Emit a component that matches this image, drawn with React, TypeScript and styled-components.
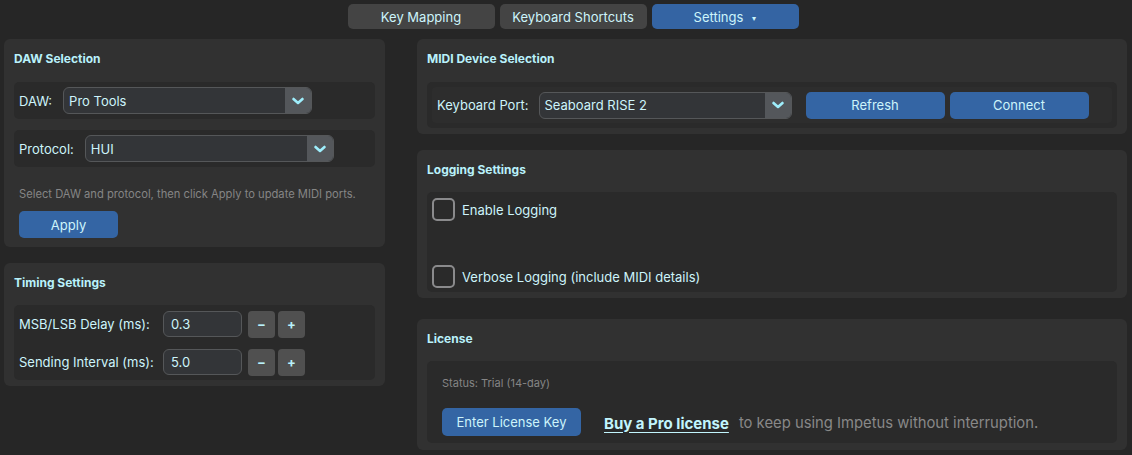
import styled, { createGlobalStyle } from "styled-components";

const GlobalStyle = createGlobalStyle`
	body {
		margin: 0;
		background: #262626;
		font-family: Inter, "Noto Sans", sans-serif;
		color: #cdf4fb;
	}
`;

const Chevron = () => (
	<svg width="14" height="10" viewBox="0 0 14 10">
		<path d="M2.5 3 L7 7 L11.5 3" fill="none" stroke="#9eeefc" strokeWidth="2.6" strokeLinecap="round" strokeLinejoin="round" />
	</svg>
);

interface SelectProps {
	value: string;
	width: number;
}

const Select = ({ value, width }: SelectProps) => (
	<SelectBox style={{ width }}>
		<SelectValue>{value}</SelectValue>
		<SelectArrow>
			<Chevron />
		</SelectArrow>
	</SelectBox>
);

const App = () => {
	return (
		<Page>
			<GlobalStyle />
			<Tabs>
				<Tab>Key Mapping</Tab>
				<Tab>Keyboard Shortcuts</Tab>
				<Tab active>
					Settings <Caret>▾</Caret>
				</Tab>
			</Tabs>
			<Columns>
				<Column>
					<Panel height={208}>
						<PanelTitle>DAW Selection</PanelTitle>
						<Stack>
							<FieldRow>
								<Label>DAW:</Label>
								<Select value="Pro Tools" width={249} />
							</FieldRow>
							<FieldRow>
								<Label>Protocol:</Label>
								<Select value="HUI" width={249} />
							</FieldRow>
						</Stack>
						<Hint>Select DAW and protocol, then click Apply to update MIDI ports.</Hint>
						<ApplyButton width={99}>Apply</ApplyButton>
					</Panel>
					<Panel height={123}>
						<PanelTitle>Timing Settings</PanelTitle>
						<TimingBox>
							<TimingRow>
								<TimingLabel>MSB/LSB Delay (ms):</TimingLabel>
								<NumberInput>0.3</NumberInput>
								<StepButton>−</StepButton>
								<StepButton>+</StepButton>
							</TimingRow>
							<TimingRow>
								<TimingLabel>Sending Interval (ms):</TimingLabel>
								<NumberInput>5.0</NumberInput>
								<StepButton>−</StepButton>
								<StepButton>+</StepButton>
							</TimingRow>
						</TimingBox>
					</Panel>
				</Column>
				<Column>
					<Panel height={95}>
						<PanelTitle>MIDI Device Selection</PanelTitle>
						<DeviceOuter>
							<DeviceRow>
								<Label>Keyboard Port:</Label>
								<Select value="Seaboard RISE 2" width={253} />
								<ButtonPair>
									<BlueButton width={139}>Refresh</BlueButton>
									<BlueButton width={139}>Connect</BlueButton>
								</ButtonPair>
							</DeviceRow>
						</DeviceOuter>
					</Panel>
					<Panel height={148}>
						<PanelTitle>Logging Settings</PanelTitle>
						<LogBox>
							<CheckRow>
								<CheckBox />
								<CheckLabel>Enable Logging</CheckLabel>
							</CheckRow>
							<CheckRow>
								<CheckBox />
								<CheckLabel>Verbose Logging (include MIDI details)</CheckLabel>
							</CheckRow>
						</LogBox>
					</Panel>
					<Panel height={131} offset={5}>
						<PanelTitle>License</PanelTitle>
						<LicenseBox>
							<Status>Status: Trial (14-day)</Status>
							<LicenseRow>
								<BlueButton width={139} tall>
									Enter License Key
								</BlueButton>
								<BuyLink>Buy a Pro license</BuyLink>
								<Trailing>to keep using Impetus without interruption.</Trailing>
							</LicenseRow>
						</LicenseBox>
					</Panel>
				</Column>
			</Columns>
		</Page>
	);
};

export default App;

const Page = styled.div`
	width: 1132px;
	height: 455px;
	box-sizing: border-box;
	padding: 4px 5px 0 4px;
	overflow: hidden;
`;

const Tabs = styled.div`
	display: flex;
	justify-content: center;
	gap: 5px;
	padding-left: 15px;
`;

const Tab = styled.div<{ active?: boolean }>`
	width: 147px;
	height: 25px;
	border-radius: 5px;
	background: ${(props) => (props.active ? "#3464a3" : "#444444")};
	display: flex;
	align-items: center;
	justify-content: center;
	font-size: 13px;
	color: #cdf4fb;
`;

const Caret = styled.span`
	font-size: 8px;
	margin-left: 9px;
	margin-top: 2px;
`;

const Columns = styled.div`
	display: grid;
	grid-template-columns: 381px 710px;
	column-gap: 32px;
	margin-top: 10px;
`;

const Column = styled.div`
	display: flex;
	flex-direction: column;
	gap: 16px;
`;

const Panel = styled.div<{ height: number; offset?: number }>`
	height: ${(props) => props.height}px;
	margin-top: ${(props) => props.offset ?? 0}px;
	box-sizing: border-box;
	background: #313131;
	border-radius: 6px;
	padding: 13px 10px 0 10px;
	display: flex;
	flex-direction: column;
`;

const PanelTitle = styled.div`
	font-size: 12px;
	font-weight: 700;
	line-height: 14px;
	color: #b9f1fb;
	margin-bottom: 16px;
`;

const Stack = styled.div`
	display: flex;
	flex-direction: column;
	gap: 11px;
`;

const FieldRow = styled.div`
	height: 37px;
	background: #2a2a2a;
	border-radius: 5px;
	display: flex;
	align-items: center;
	padding-left: 5px;
	gap: 11px;
`;

const Label = styled.span`
	font-size: 13px;
	color: #cdf4fb;
	white-space: nowrap;
`;

const SelectBox = styled.div`
	height: 27px;
	box-sizing: border-box;
	border: 1.5px solid #555759;
	border-radius: 6px;
	background: #333538;
	display: flex;
	overflow: hidden;
`;

const SelectValue = styled.div`
	flex: 1;
	display: flex;
	align-items: center;
	padding-left: 5px;
	font-size: 13px;
	color: #cdf4fb;
`;

const SelectArrow = styled.div`
	width: 26px;
	background: #54575b;
	display: flex;
	align-items: center;
	justify-content: center;
`;

const Hint = styled.div`
	font-size: 11.2px;
	color: #858585;
	margin: 20px 0 10px 5px;
`;

const BlueButton = styled.div<{ width: number; tall?: boolean }>`
	width: ${(props) => props.width}px;
	height: ${(props) => (props.tall ? 28 : 27)}px;
	flex-shrink: 0;
	border-radius: 5px;
	background: #3465a4;
	display: flex;
	align-items: center;
	justify-content: center;
	font-size: 13px;
	color: #cdf4fb;
`;

const ApplyButton = styled(BlueButton)`
	margin-left: 5px;
`;

const TimingBox = styled.div`
	background: #2a2a2a;
	border-radius: 5px;
	padding: 6px 5px;
	display: flex;
	flex-direction: column;
	gap: 12px;
	margin-top: -1px;
	height: 75px;
	box-sizing: border-box;
`;

const TimingRow = styled.div`
	display: flex;
	align-items: center;
	height: 26px;
`;

const TimingLabel = styled.span`
	width: 144px;
	font-size: 13px;
	color: #cdf4fb;
`;

const NumberInput = styled.div`
	width: 79px;
	height: 26px;
	box-sizing: border-box;
	border: 1.5px solid #555759;
	border-radius: 6px;
	background: #333538;
	padding-left: 7px;
	display: flex;
	align-items: center;
	font-size: 13px;
	color: #cdf4fb;
	margin-right: 6px;
`;

const StepButton = styled.div`
	width: 27px;
	height: 27px;
	margin-right: 3px;
	border-radius: 4px;
	background: #505050;
	display: flex;
	align-items: center;
	justify-content: center;
	font-size: 13px;
	font-weight: 700;
	color: #b9f1fb;
`;

const DeviceOuter = styled.div`
	background: #2a2a2a;
	border-radius: 5px;
	padding: 5px;
	height: 46px;
	box-sizing: border-box;
`;

const DeviceRow = styled.div`
	background: #2d2d2d;
	border-radius: 4px;
	height: 36px;
	display: flex;
	align-items: center;
	padding-left: 5px;
	gap: 10px;
`;

const ButtonPair = styled.div`
	display: flex;
	gap: 5px;
	margin-left: 4px;
`;

const LogBox = styled.div`
	background: #2a2a2a;
	border-radius: 5px;
	height: 100px;
	box-sizing: border-box;
	padding: 6px 5px 4px 5px;
	display: flex;
	flex-direction: column;
	justify-content: space-between;
	margin-top: -1px;
`;

const CheckRow = styled.div`
	display: flex;
	align-items: center;
	gap: 7px;
`;

const CheckBox = styled.div`
	width: 23px;
	height: 23px;
	box-sizing: border-box;
	border: 2px solid #8a8a8c;
	border-radius: 5px;
`;

const CheckLabel = styled.span`
	font-size: 13px;
	color: #cdf4fb;
`;

const LicenseBox = styled.div`
	background: #2a2a2a;
	border-radius: 5px;
	height: 82px;
	box-sizing: border-box;
	padding: 15px 15px 0 15px;
	margin-top: -1px;
`;

const Status = styled.div`
	font-size: 11px;
	color: #858585;
`;

const LicenseRow = styled.div`
	display: flex;
	align-items: center;
	margin-top: 18px;
`;

const BuyLink = styled.span`
	font-size: 15px;
	font-weight: 700;
	color: #c2f5fd;
	text-decoration: underline;
	text-underline-offset: 3px;
	margin-left: 23px;
	margin-top: 2px;
`;

const Trailing = styled.span`
	font-size: 14.8px;
	color: #888888;
	margin-left: 10px;
	margin-top: 2px;
`;
